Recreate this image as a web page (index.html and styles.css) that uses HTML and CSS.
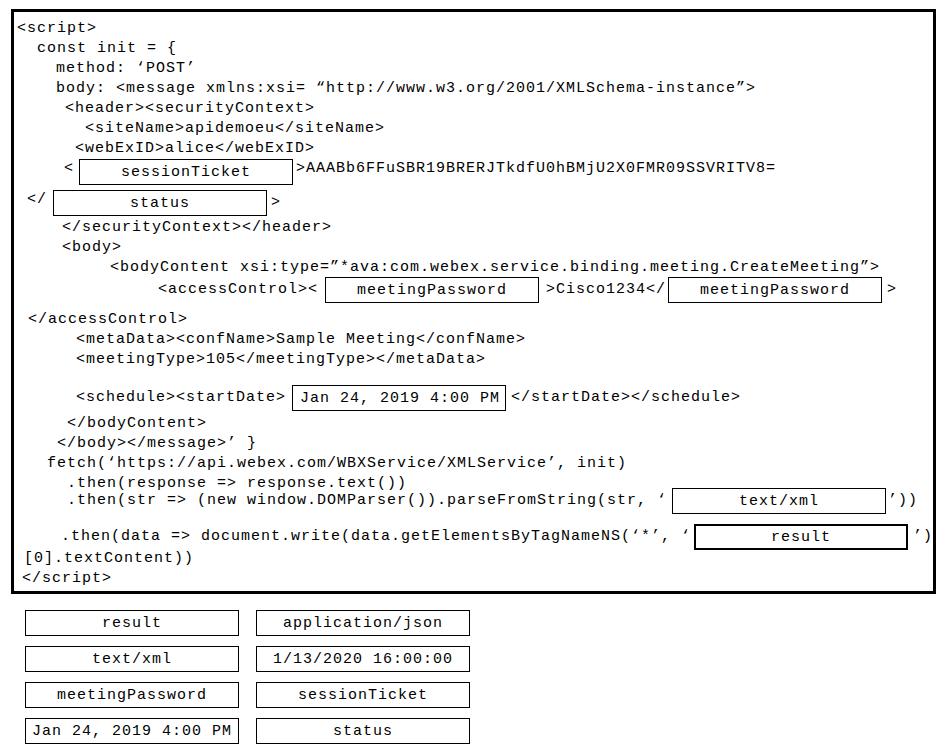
FILE: index.html
```html
<!DOCTYPE html>
<html>
<head>
<meta charset="utf-8">
<title>Webex XML API</title>
<link rel="stylesheet" href="styles.css">
</head>
<body>
<div class="frame">
<div class="ln p3"><span class="t">&lt;script&gt;</span></div>
<div class="ln p23"><span class="t">const init = {</span></div>
<div class="ln p42"><span class="t">method: ‘POST’</span></div>
<div class="ln p42"><span class="t">body: &lt;message xmlns:xsi= “http://www.w3.org/2001/XMLSchema-instance”&gt;</span></div>
<div class="ln p51"><span class="t">&lt;header&gt;&lt;securityContext&gt;</span></div>
<div class="ln p71"><span class="t">&lt;siteName&gt;apidemoeu&lt;/siteName&gt;</span></div>
<div class="ln p61"><span class="t">&lt;webExID&gt;alice&lt;/webExID&gt;</span></div>
<div class="ln bx p50 mt2"><span class="t up">&lt;</span><span class="box g5">sessionTicket</span><span class="t up g3">&gt;AAABb6FFuSBR19BRERJTkdfU0hBMjU2X0FMR09SSVRITV8=</span></div>
<div class="ln bx p13 mt5"><span class="t up">&lt;/</span><span class="box g6">status</span><span class="t g4">&gt;</span></div>
<div class="ln p48"><span class="t">&lt;/securityContext&gt;&lt;/header&gt;</span></div>
<div class="ln p48"><span class="t">&lt;body&gt;</span></div>
<div class="ln p96"><span class="t">&lt;bodyContent xsi:type=”*ava:com.webex.service.binding.meeting.CreateMeeting”&gt;</span></div>
<div class="ln bx p144 mt1"><span class="t">&lt;accessControl&gt;&lt;</span><span class="box g7">meetingPassword</span><span class="t g7">&gt;Cisco1234&lt;/</span><span class="box g2">meetingPassword</span><span class="t g5">&gt;</span></div>
<div class="ln p14 mt5"><span class="t">&lt;/accessControl&gt;</span></div>
<div class="ln p62"><span class="t">&lt;metaData&gt;&lt;confName&gt;Sample Meeting&lt;/confName&gt;</span></div>
<div class="ln p62"><span class="t">&lt;meetingType&gt;105&lt;/meetingType&gt;&lt;/metaData&gt;</span></div>
<div class="ln bx p62 mt17"><span class="t">&lt;schedule&gt;&lt;startDate&gt;</span><span class="box left g6">Jan 24, 2019 4:00 PM</span><span class="t g5">&lt;/startDate&gt;&lt;/schedule&gt;</span></div>
<div class="ln p53 mt1"><span class="t">&lt;/bodyContent&gt;</span></div>
<div class="ln p43"><span class="t">&lt;/body&gt;&lt;/message&gt;’ }</span></div>
<div class="ln p33"><span class="t">fetch(‘https://api.webex.com/WBXService/XMLService’, init)</span></div>
<div class="ln p53"><span class="t">.then(response =&gt; response.text())</span></div>
<div class="ln bx p53 mtn4"><span class="t">.then(str =&gt; (new window.DOMParser()).parseFromString(str, ‘</span><span class="box g5">text/xml</span><span class="t g2">’))</span></div>
<div class="ln bx p47 mt10"><span class="t">.then(data =&gt; document.write(data.getElementsByTagNameNS(‘*’, ‘</span><span class="box thick g3">result</span><span class="t g5">’)</span></div>
<div class="ln p10 mtn3"><span class="t">[0].textContent))</span></div>
<div class="ln p8"><span class="t">&lt;/script&gt;</span></div>
</div>
<div class="bank">
<div class="box">result</div>
<div class="box">application/json</div>
<div class="box">text/xml</div>
<div class="box">1/13/2020 16:00:00</div>
<div class="box">meetingPassword</div>
<div class="box">sessionTicket</div>
<div class="box">Jan 24, 2019 4:00 PM</div>
<div class="box">status</div>
</div>
</body>
</html>
```
FILE: styles.css
```css
body {
  margin: 0;
  background: #fff;
  color: #000;
  font-family: "Liberation Mono", "Courier New", monospace;
  font-size: 15px;
  letter-spacing: 1px;
}

.frame {
  box-sizing: border-box;
  width: 925px;
  margin: 9px 0 0 11px;
  border: 3px solid #000;
  padding: 5px 0 4px;
}

.ln {
  display: flex;
  align-items: center;
  height: 20px;
}

.ln.bx {
  height: 26px;
}

.t {
  white-space: pre;
  line-height: 20px;
  padding-top: 4px;
}

.ln.bx .t {
  padding-top: 0;
}

.ln.bx .t.up {
  padding-bottom: 6px;
}

.box {
  box-sizing: border-box;
  width: 214px;
  height: 26px;
  border: 1px solid #000;
  display: flex;
  align-items: center;
  justify-content: center;
  white-space: pre;
  flex: none;
}

.box.left {
  justify-content: flex-start;
  padding-left: 7px;
}

.box.thick {
  border-width: 2px;
}

/* indents */
.p3 { padding-left: 3px; }
.p8 { padding-left: 8px; }
.p10 { padding-left: 10px; }
.p13 { padding-left: 13px; }
.p14 { padding-left: 14px; }
.p23 { padding-left: 23px; }
.p33 { padding-left: 33px; }
.p42 { padding-left: 42px; }
.p43 { padding-left: 43px; }
.p47 { padding-left: 47px; }
.p48 { padding-left: 48px; }
.p50 { padding-left: 50px; }
.p51 { padding-left: 51px; }
.p53 { padding-left: 53px; }
.p61 { padding-left: 61px; }
.p62 { padding-left: 62px; }
.p71 { padding-left: 71px; }
.p96 { padding-left: 96px; }
.p144 { padding-left: 144px; }

/* vertical adjustments */
.mt1 { margin-top: 1px; }
.mt2 { margin-top: 2px; }
.mt5 { margin-top: 5px; }
.mt10 { margin-top: 10px; }
.mt17 { margin-top: 17px; }
.mtn3 { margin-top: -3px; }
.mtn4 { margin-top: -4px; }

/* horizontal gaps */
.g2 { margin-left: 2px; }
.g3 { margin-left: 3px; }
.g4 { margin-left: 4px; }
.g5 { margin-left: 5px; }
.g6 { margin-left: 6px; }
.g7 { margin-left: 7px; }

.bank {
  display: grid;
  grid-template-columns: 214px 214px;
  column-gap: 17px;
  row-gap: 10px;
  margin: 16px 0 0 25px;
}
```
